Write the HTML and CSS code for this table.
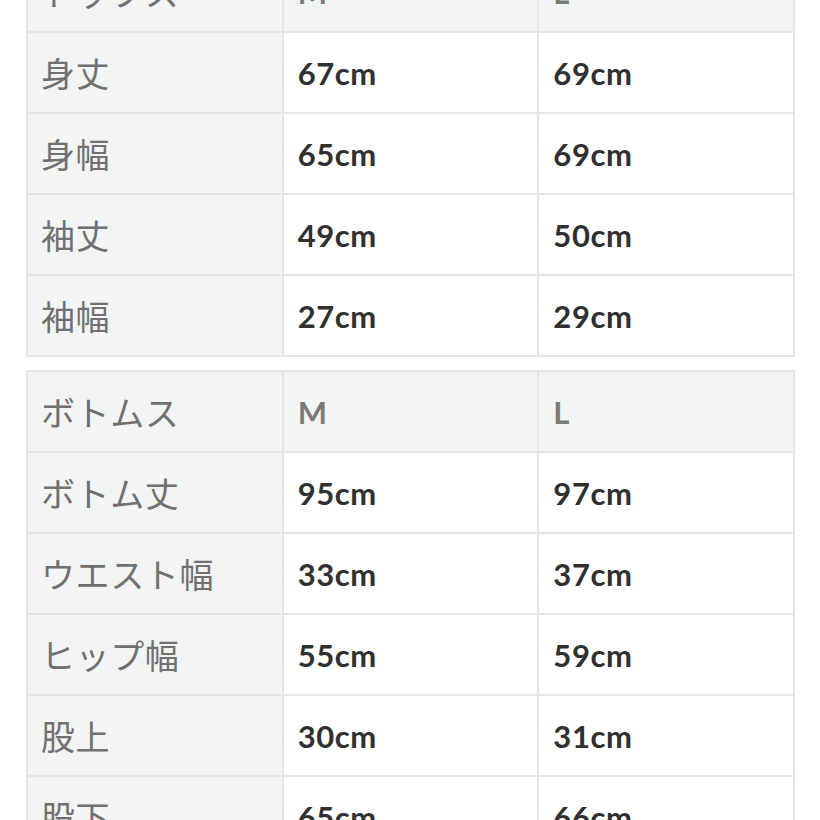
FILE: index.html
```html
<!DOCTYPE html>
<html lang="ja">
<head>
<meta charset="utf-8">
<link rel="stylesheet" href="styles.css">
</head>
<body>
<div class="page">
  <table class="size top">
    <tr class="head"><th>トップス</th><th class="num">M</th><th class="num">L</th></tr>
    <tr><th>身丈</th><td>67cm</td><td>69cm</td></tr>
    <tr><th>身幅</th><td>65cm</td><td>69cm</td></tr>
    <tr><th>袖丈</th><td>49cm</td><td>50cm</td></tr>
    <tr><th>袖幅</th><td>27cm</td><td>29cm</td></tr>
  </table>
  <table class="size">
    <tr class="head"><th>ボトムス</th><th class="num">M</th><th class="num">L</th></tr>
    <tr><th>ボトム丈</th><td>95cm</td><td>97cm</td></tr>
    <tr><th>ウエスト幅</th><td>33cm</td><td>37cm</td></tr>
    <tr><th>ヒップ幅</th><td>55cm</td><td>59cm</td></tr>
    <tr><th>股上</th><td>30cm</td><td>31cm</td></tr>
    <tr><th>股下</th><td>65cm</td><td>66cm</td></tr>
  </table>
</div>
</body>
</html>
```

FILE: styles.css
```css
html, body {
  margin: 0;
  padding: 0;
  background: #ffffff;
  height: 820px;
  overflow: hidden;
}
.page {
  padding-left: 26px;
  width: 770px;
  height: 820px;
  overflow: hidden;
}
.size {
  border-collapse: collapse;
  width: 769px;
  table-layout: fixed;
  margin-bottom: 13px;
}
.top {
  margin-top: -50px;
}
.size th,
.size td {
  border: 2px solid #e4e5e5;
  height: 81px;
  padding: 0 0 0 14px;
  text-align: left;
  vertical-align: middle;
  box-sizing: border-box;
}
.size th {
  background: #f3f4f4;
  color: #707070;
  font-family: "Noto Sans CJK JP", "Noto Sans", sans-serif;
  font-weight: 400;
  font-size: 34px;
  letter-spacing: 0.6px;
  padding-left: 13px;
}
.size td {
  background: #ffffff;
  color: #303030;
  font-family: Lato, "Noto Sans", sans-serif;
  font-weight: 700;
  font-size: 31px;
  letter-spacing: 0.6px;
}
.size .head th.num {
  font-family: Lato, "Noto Sans", sans-serif;
  font-weight: 700;
  font-size: 31px;
  color: #7a7a7a;
  padding-left: 14px;
}
```
